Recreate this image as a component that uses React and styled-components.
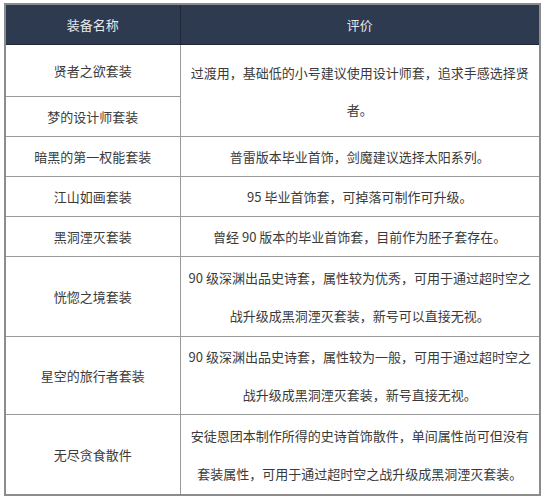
import React from "react";
import styled, { createGlobalStyle } from "styled-components";

const Global = createGlobalStyle`
  html, body { margin: 0; padding: 0; background: #ffffff; }
  body { font-family: "Noto Sans CJK SC", "Noto Sans", sans-serif; }
`;

const Page = styled.div`
  padding: 3px 6px 0 4px;
`;

const Table = styled.table`
  width: 537px;
  border-collapse: collapse;
  table-layout: fixed;
  border: 2px solid #8c8c8c;
  font-size: 13px;
  color: #3a3a3a;
`;

const HeadCell = styled.th`
  background: #2e3a4f;
  color: #e6e8ec;
  font-weight: normal;
  height: 39px;
  padding: 0;
  text-align: center;
  border: 1px solid #1f2736;
`;

const Cell = styled.td`
  border: 1px solid #9a9a9a;
  text-align: center;
  vertical-align: middle;
  padding: 0 8px;
  height: ${(p) => p.$h}px;
  line-height: ${(p) => (p.$lh ? p.$lh : 20)}px;
  white-space: nowrap;
`;

const rows = [
  { name: "暗黑的第一权能套装", h: 39, desc: ["普雷版本毕业首饰，剑魔建议选择太阳系列。"] },
  { name: "江山如画套装", h: 39, desc: ["95 毕业首饰套，可掉落可制作可升级。"] },
  { name: "黑洞湮灭套装", h: 39, desc: ["曾经 90 版本的毕业首饰套，目前作为胚子套存在。"] },
  {
    name: "恍惚之境套装",
    h: 79,
    desc: ["90 级深渊出品史诗套，属性较为优秀，可用于通过超时空之", "战升级成黑洞湮灭套装，新号可以直接无视。"],
  },
  {
    name: "星空的旅行者套装",
    h: 77,
    desc: ["90 级深渊出品史诗套，属性较为一般，可用于通过超时空之", "战升级成黑洞湮灭套装，新号直接无视。"],
  },
  {
    name: "无尽贪食散件",
    h: 79,
    desc: ["安徒恩团本制作所得的史诗首饰散件，单间属性尚可但没有", "套装属性，可用于通过超时空之战升级成黑洞湮灭套装。"],
  },
];

const Lines = ({ lines }) =>
  lines.map((l, i) => (
    <React.Fragment key={i}>
      {i > 0 && <br />}
      {l}
    </React.Fragment>
  ));

export default function App() {
  return (
    <Page>
      <Global />
      <Table>
        <colgroup>
          <col style={{ width: 175 }} />
          <col />
        </colgroup>
        <thead>
          <tr>
            <HeadCell>装备名称</HeadCell>
            <HeadCell>评价</HeadCell>
          </tr>
        </thead>
        <tbody>
          <tr>
            <Cell $h={51}>贤者之欲套装</Cell>
            <Cell rowSpan={2} $h={91} $lh={37}>
              <Lines lines={["过渡用，基础低的小号建议使用设计师套，追求手感选择贤", "者。"]} />
            </Cell>
          </tr>
          <tr>
            <Cell $h={39}>梦的设计师套装</Cell>
          </tr>
          {rows.map((r) => (
            <tr key={r.name}>
              <Cell $h={r.h}>{r.name}</Cell>
              <Cell $h={r.h} $lh={r.desc.length > 1 ? 38 : 20}>
                <Lines lines={r.desc} />
              </Cell>
            </tr>
          ))}
        </tbody>
      </Table>
    </Page>
  );
}
